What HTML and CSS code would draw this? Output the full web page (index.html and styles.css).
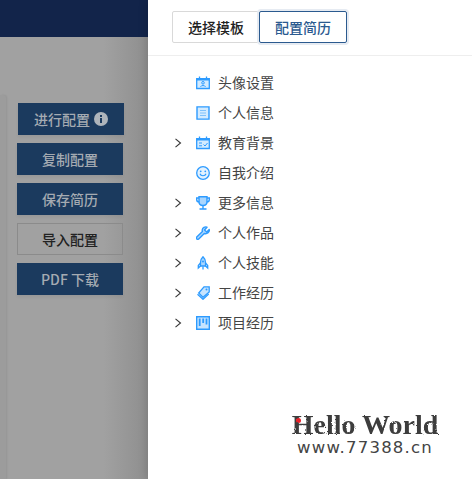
FILE: index.html
```html
<!DOCTYPE html>
<html>
<head>
<meta charset="utf-8">
<title>配置简历</title>
<link rel="stylesheet" href="styles.css">
</head>
<body>
<div class="page">
  <div class="backdrop">
    <div class="topbar"></div>
    <div class="workspace">
      <div class="sheet"></div>
      <div class="actions">
        <button class="action first">进行配置
          <svg class="info" viewBox="0 0 14 14"><circle cx="7" cy="7" r="7" fill="#aeb4bb"/><rect x="6" y="6" width="2" height="5" fill="#1b3a5e"/><rect x="6" y="3" width="2" height="2" fill="#1b3a5e"/></svg>
        </button>
        <button class="action">复制配置</button>
        <button class="action">保存简历</button>
        <button class="action plain">导入配置</button>
        <button class="action">PDF 下载</button>
      </div>
    </div>
  </div>

  <div class="drawer">
    <div class="drawer-head">
      <div class="tabs">
        <div class="tab">选择模板</div>
        <div class="tab active">配置简历</div>
      </div>
    </div>
    <ul class="tree">
      <li class="node">
        <span class="arrow"></span>
        <svg class="icon" viewBox="0 0 14 14"><path d="M.7 2.700h12.600v9.800H.7z" fill="#d3ebff" stroke="#2d9bff" stroke-width="1.300"/><path d="M.7 3.500h12.600" stroke="#2d9bff" stroke-width="2"/><path d="M3.500.5v3M10.500.5v3" stroke="#2d9bff" stroke-width="1.300"/><circle cx="7" cy="6.800" r="1.300" fill="none" stroke="#2d9bff"/><path d="M4.500 10.800c.5-1.700 4.500-1.700 5 0" fill="none" stroke="#2d9bff"/></svg>
        <span class="label">头像设置</span>
      </li>
      <li class="node">
        <span class="arrow"></span>
        <svg class="icon" viewBox="0 0 14 14"><path d="M1 .9h12v12.200H1z" fill="#d3ebff" stroke="#2d9bff" stroke-width="1.400"/><path d="M4 4.500h6M4 7h6M4 9.500h6" stroke="#7fc1fb"/></svg>
        <span class="label">个人信息</span>
      </li>
      <li class="node">
        <svg class="arrow" viewBox="0 0 8 10"><path d="M1.500.8 6.500 5l-5 4.200" fill="none" stroke="#333" stroke-width="1.100"/></svg>
        <svg class="icon" viewBox="0 0 14 14"><path d="M.7 2.700h12.600v9.800H.7z" fill="#d3ebff" stroke="#2d9bff" stroke-width="1.300"/><path d="M.7 3.500h12.600" stroke="#2d9bff" stroke-width="2"/><path d="M3.500.5v3M10.500.5v3" stroke="#2d9bff" stroke-width="1.300"/><path d="M3 7h3M3 9.800h3M7.500 8.500l1.500 1.500 2.500-3" fill="none" stroke="#2d9bff"/></svg>
        <span class="label">教育背景</span>
      </li>
      <li class="node">
        <span class="arrow"></span>
        <svg class="icon" viewBox="0 0 14 14"><circle cx="7" cy="7" r="6.300" fill="#e3f2ff" stroke="#2d9bff" stroke-width="1.300"/><path d="M4 7.800c.8 2.600 5.200 2.600 6 0" fill="none" stroke="#2d9bff" stroke-width="1.200"/><circle cx="4.700" cy="5.300" r=".9" fill="#2d9bff"/><circle cx="9.300" cy="5.300" r=".9" fill="#2d9bff"/></svg>
        <span class="label">自我介绍</span>
      </li>
      <li class="node">
        <svg class="arrow" viewBox="0 0 8 10"><path d="M1.500.8 6.500 5l-5 4.200" fill="none" stroke="#333" stroke-width="1.100"/></svg>
        <svg class="icon" viewBox="0 0 14 14"><path d="M3 .8h8v5c0 2.400-1.800 3.700-4 3.700S3 8.200 3 5.800z" fill="#a9d6ff" stroke="#2d9bff" stroke-width="1.400"/><path d="M3 2H.7v1.500C.7 5 1.800 6 3.200 6M11 2h2.300v1.500C13.300 5 12.200 6 10.800 6M7 9.500v3M3.500 13h7" fill="none" stroke="#2d9bff" stroke-width="1.400"/></svg>
        <span class="label">更多信息</span>
      </li>
      <li class="node">
        <svg class="arrow" viewBox="0 0 8 10"><path d="M1.500.8 6.500 5l-5 4.200" fill="none" stroke="#333" stroke-width="1.100"/></svg>
        <svg class="icon" viewBox="0 0 14 14"><path d="M13.200 3.500 10.700 6 8.500 4 11 1.200C9 .3 6.500 1.500 6.200 4c0 .6 0 1 .2 1.500L1 10.800c-.7.800-.7 1.500-.1 2.100.6.600 1.400.6 2.100-.1l5.300-5.300c2.800.8 5.600-1.500 4.900-4z" fill="#a9d6ff" stroke="#2d9bff" stroke-width="1.400" stroke-linejoin="round"/></svg>
        <span class="label">个人作品</span>
      </li>
      <li class="node">
        <svg class="arrow" viewBox="0 0 8 10"><path d="M1.500.8 6.500 5l-5 4.200" fill="none" stroke="#333" stroke-width="1.100"/></svg>
        <svg class="icon" viewBox="0 0 14 14"><path d="M7 .7C5 2.500 4.500 4.500 4.500 6.500v3.500h5V6.500C9.500 4.500 9 2.500 7 .7z" fill="#a9d6ff" stroke="#2d9bff" stroke-width="1.300"/><path d="M4.500 7 2.300 9.500V12l2.200-2M9.500 7l2.200 2.500V12l-2.200-2M7 10.500v3" fill="none" stroke="#2d9bff" stroke-width="1.300"/><circle cx="7" cy="5.500" r="1" fill="#2d9bff"/></svg>
        <span class="label">个人技能</span>
      </li>
      <li class="node">
        <svg class="arrow" viewBox="0 0 8 10"><path d="M1.500.8 6.500 5l-5 4.200" fill="none" stroke="#333" stroke-width="1.100"/></svg>
        <svg class="icon" viewBox="0 0 14 14"><path d="M8 .8h5.200V6L7 11.300 2.700 7z" fill="#c6e4ff" stroke="#2d9bff" stroke-width="1.300"/><path d="M1.500 8.300 7 13.300 12.700 8" fill="none" stroke="#2d9bff" stroke-width="1.300"/><circle cx="10.500" cy="3.500" r="1" fill="#2d9bff"/></svg>
        <span class="label">工作经历</span>
      </li>
      <li class="node">
        <svg class="arrow" viewBox="0 0 8 10"><path d="M1.500.8 6.500 5l-5 4.200" fill="none" stroke="#333" stroke-width="1.100"/></svg>
        <svg class="icon" viewBox="0 0 14 14"><path d="M.7.700h12.600v12.600H.7z" fill="#c6e4ff" stroke="#2d9bff" stroke-width="1.400"/><path d="M3.700 2.500v7.500M7.200 2.500v4.500M10.500 2.500v6" stroke="#2d9bff" stroke-width="1.800"/></svg>
        <span class="label">项目经历</span>
      </li>
    </ul>
  </div>

  <div class="watermark">
    <div class="wm-title">Hello World<span class="wm-dot"></span></div>
    <div class="wm-site">www.77388.cn</div>
  </div>

  <svg class="filters" width="0" height="0">
    <filter id="rough"><feTurbulence type="fractalNoise" baseFrequency="0.9" numOctaves="1" seed="4"/><feDisplacementMap in="SourceGraphic" scale="2.500"/></filter>
  </svg>
</div>
</body>
</html>
```

FILE: styles.css
```css
/* page frame */
html, body {
  margin: 0;
  padding: 0;
  height: 100%;
  overflow: hidden;
  font-family: "Noto Sans CJK SC", "Noto Sans", sans-serif;
}

.page {
  display: flex;
  height: 479px;
  position: relative;
  background: #fff;
}

/* dimmed page behind the drawer */
.backdrop {
  width: 148px;
  display: flex;
  flex-direction: column;
  background: linear-gradient(to right, #a1a1a1 0, #a1a1a1 70%, #8e8e8e 100%);
}

.topbar {
  height: 37px;
  background: #12244a;
}

.workspace {
  flex: 1;
  display: flex;
  padding-top: 58px;
}

.sheet {
  width: 6px;
  background: #9c9c9c;
  border-radius: 0 3px 0 0;
  box-shadow: 1px 0 2px rgba(0, 0, 0, .08);
}

.actions {
  display: flex;
  flex-direction: column;
  gap: 8px;
  padding: 8px 0 0 11px;
}

.action {
  width: 106px;
  height: 32px;
  padding: 0;
  border: 0;
  background: #1b3a5e;
  color: #a5abb2;
  font-family: inherit;
  font-size: 14px;
  font-weight: 500;
  line-height: 32px;
  box-shadow: 0 2px 3px rgba(0, 0, 0, .06);
}

.action.first {
  margin-left: 1px;
  display: flex;
  align-items: center;
  justify-content: center;
  gap: 4px;
}

.action.plain {
  background: transparent;
  border: 1px solid #8b8b8b;
  line-height: 30px;
  color: #222;
  box-shadow: none;
}

.info {
  width: 14px;
  height: 14px;
}

/* drawer */
.drawer {
  flex: 1;
  background: #fff;
  box-shadow: -2px 0 8px rgba(0, 0, 0, .12);
}

.drawer-head {
  height: 56px;
  box-sizing: border-box;
  padding: 11px 0 0 24px;
  border-bottom: 1px solid #eee;
}

.tabs {
  display: flex;
}

.tab {
  width: 88px;
  height: 32px;
  box-sizing: border-box;
  border: 1px solid #d9d9d9;
  border-radius: 2px 0 0 2px;
  text-align: center;
  font-size: 14px;
  font-weight: 500;
  line-height: 30px;
  color: #222;
}

.tab.active {
  margin-left: -1px;
  border-color: #2b5a8f;
  border-radius: 2px;
  color: #2b5a8f;
  box-shadow: 0 0 0 2px #e6ebf2;
}

.tree {
  list-style: none;
  margin: 0;
  padding: 12px 0 0 26px;
}

.node {
  display: flex;
  align-items: center;
  height: 30px;
}

.arrow {
  width: 8px;
  height: 10px;
  flex: none;
}

.icon {
  width: 14px;
  height: 14px;
  margin-left: 14px;
  flex: none;
}

.label {
  margin-left: 8px;
  font-size: 14px;
  color: #444;
  line-height: 20px;
  position: relative;
  top: -1px;
}

/* site stamp in the corner */
.watermark {
  position: absolute;
  left: 291px;
  top: 409px;
  width: 148px;
  text-align: center;
}

.wm-title {
  position: relative;
  font-family: "Liberation Serif", serif;
  font-size: 28px;
  font-weight: bold;
  line-height: 32px;
  color: #3c3c3c;
  white-space: nowrap;
  filter: url(#rough);
}

.wm-dot {
  position: absolute;
  left: 5px;
  top: 9px;
  width: 5px;
  height: 5px;
  border-radius: 50%;
  background: #e8222a;
}

.wm-site {
  font-family: "DejaVu Sans", sans-serif;
  font-size: 16.500px;
  line-height: 14px;
  letter-spacing: 1.200px;
  color: #444;
  white-space: nowrap;
}

.filters {
  position: absolute;
}
```
